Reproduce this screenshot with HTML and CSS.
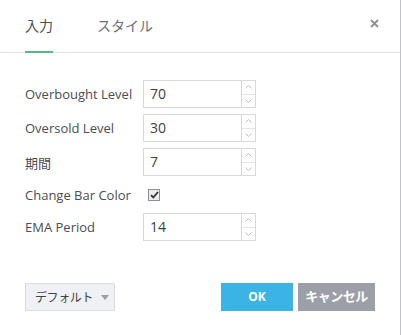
FILE: index.html
```html
<html>
<head>
    <meta charset="utf-8">
    <link rel="stylesheet" href="styles.css">
</head>
<body>
    <div class="dialog">
        <div class="tabs">
            <div class="tab active">入力</div>
            <div class="tab">スタイル</div>
            <div class="close">
                <svg width="9" height="9" viewBox="0 0 9 9"><path d="M1 1L8 8M8 1L1 8" stroke="#8c8f96" stroke-width="1.8"/></svg>
            </div>
        </div>

        <div class="form">
            <div class="row">
                <div class="label">Overbought Level</div>
                <div class="spin">
                    <div class="val">70</div>
                    <div class="arrows">
                        <div class="up"><svg width="7" height="4" viewBox="0 0 7 4"><path d="M0.5 3.5L3.5 0.5L6.5 3.5" fill="none" stroke="#b8bcc4"/></svg></div>
                        <div class="down"><svg width="7" height="4" viewBox="0 0 7 4"><path d="M0.5 0.5L3.5 3.5L6.5 0.5" fill="none" stroke="#b8bcc4"/></svg></div>
                    </div>
                </div>
            </div>
            <div class="row">
                <div class="label">Oversold Level</div>
                <div class="spin">
                    <div class="val">30</div>
                    <div class="arrows">
                        <div class="up"><svg width="7" height="4" viewBox="0 0 7 4"><path d="M0.5 3.5L3.5 0.5L6.5 3.5" fill="none" stroke="#b8bcc4"/></svg></div>
                        <div class="down"><svg width="7" height="4" viewBox="0 0 7 4"><path d="M0.5 0.5L3.5 3.5L6.5 0.5" fill="none" stroke="#b8bcc4"/></svg></div>
                    </div>
                </div>
            </div>
            <div class="row">
                <div class="label">期間</div>
                <div class="spin">
                    <div class="val">7</div>
                    <div class="arrows">
                        <div class="up"><svg width="7" height="4" viewBox="0 0 7 4"><path d="M0.5 3.5L3.5 0.5L6.5 3.5" fill="none" stroke="#b8bcc4"/></svg></div>
                        <div class="down"><svg width="7" height="4" viewBox="0 0 7 4"><path d="M0.5 0.5L3.5 3.5L6.5 0.5" fill="none" stroke="#b8bcc4"/></svg></div>
                    </div>
                </div>
            </div>
            <div class="row check-row">
                <div class="label">Change Bar Color</div>
                <div class="check">
                    <svg width="9" height="8" viewBox="0 0 9 8"><path d="M1 4.2L3.3 6.5L8 1" fill="none" stroke="#2f3136" stroke-width="1.8"/></svg>
                </div>
            </div>
            <div class="row">
                <div class="label">EMA Period</div>
                <div class="spin">
                    <div class="val">14</div>
                    <div class="arrows">
                        <div class="up"><svg width="7" height="4" viewBox="0 0 7 4"><path d="M0.5 3.5L3.5 0.5L6.5 3.5" fill="none" stroke="#b8bcc4"/></svg></div>
                        <div class="down"><svg width="7" height="4" viewBox="0 0 7 4"><path d="M0.5 0.5L3.5 3.5L6.5 0.5" fill="none" stroke="#b8bcc4"/></svg></div>
                    </div>
                </div>
            </div>
        </div>

        <div class="footer">
            <div class="btn-default">デフォルト<span class="caret"></span></div>
            <div class="btn ok">OK</div>
            <div class="btn cancel">キャンセル</div>
        </div>
    </div>
</body>
</html>
```

FILE: styles.css
```css
html, body{
    margin: 0;
    padding: 0;
    background: #fff;
}
body{
    font-family: "Open Sans", "Noto Sans CJK JP", sans-serif;
    font-size: 13px;
    color: #4a4d54;
}
.dialog{
    width: 400px;
    height: 335px;
    border-right: 1px solid #bfc2c8;
}
.tabs{
    display: flex;
    align-items: center;
    height: 52px;
    padding-left: 25px;
    border-bottom: 1px solid #dfe1e6;
}
.tab{
    position: relative;
    height: 52px;
    line-height: 52px;
    font-size: 14px;
    color: #6b6e75;
    margin-right: 44px;
}
.tab.active{
    color: #4a4e57;
}
.tab.active:after{
    content: "";
    position: absolute;
    left: 0;
    right: 0;
    bottom: -1px;
    height: 2px;
    background: #53b987;
}
.close{
    margin-left: auto;
    margin-right: 21px;
    margin-top: -5px;
    display: flex;
}
.form{
    padding: 27px 0 0 25px;
    display: flex;
    flex-direction: column;
    gap: 6px;
}
.row{
    display: flex;
    align-items: center;
    height: 28px;
}
.label{
    width: 118px;
}
.spin{
    display: flex;
    width: 111px;
    height: 26px;
    border: 1px solid #d6d9de;
}
.val{
    flex: 1;
    padding-left: 6px;
    line-height: 26px;
    font-size: 14px;
    color: #3c3f45;
}
.arrows{
    width: 13px;
    border-left: 1px solid #d6d9de;
    display: flex;
    flex-direction: column;
}
.up, .down{
    flex: 1;
    display: flex;
    align-items: center;
    justify-content: center;
}
.up{
    border-bottom: 1px solid #e3e5e9;
}
.check-row{
    height: 25px;
}
.check{
    margin-left: 5px;
    width: 10px;
    height: 10px;
    border: 1px solid #8e9097;
    background: #ececec;
    display: flex;
    align-items: center;
    justify-content: center;
}
.footer{
    display: flex;
    align-items: center;
    padding: 42px 25px 0 25px;
}
.btn-default{
    width: 90px;
    height: 28px;
    box-sizing: border-box;
    border: 1px solid #dadce1;
    background: #f0f1f5;
    display: flex;
    align-items: center;
    padding-left: 9px;
    font-size: 12px;
    letter-spacing: -0.4px;
    white-space: nowrap;
    color: #3f4249;
}
.caret{
    display: inline-block;
    margin-left: 8px;
    width: 0;
    height: 0;
    border-left: 4px solid transparent;
    border-right: 4px solid transparent;
    border-top: 5px solid #9c9ea4;
}
.btn{
    height: 28px;
    line-height: 27px;
    text-align: center;
    color: #fff;
    font-weight: bold;
    font-size: 12px;
}
.ok{
    margin-left: auto;
    width: 72px;
    background: #3bb3e4;
}
.cancel{
    margin-left: 5px;
    width: 77px;
    background: #9c9fa7;
    font-size: 13px;
    letter-spacing: -0.5px;
}
```
